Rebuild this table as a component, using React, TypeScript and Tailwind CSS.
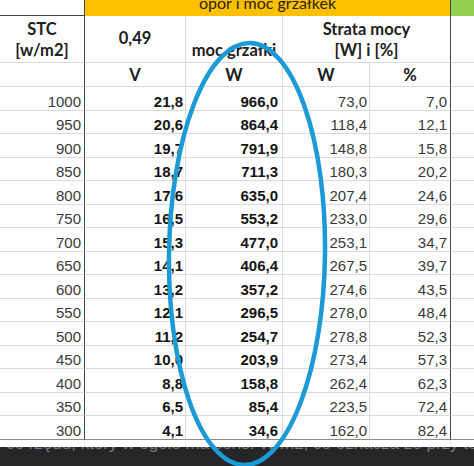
import React from "react";

const rows: [string, string, string, string, string][] = [
  ["1000", "21,8", "966,0", "73,0", "7,0"],
  ["950", "20,6", "864,4", "118,4", "12,1"],
  ["900", "19,7", "791,9", "148,8", "15,8"],
  ["850", "18,7", "711,3", "180,3", "20,2"],
  ["800", "17,6", "635,0", "207,4", "24,6"],
  ["750", "16,5", "553,2", "233,0", "29,6"],
  ["700", "15,3", "477,0", "253,1", "34,7"],
  ["650", "14,1", "406,4", "267,5", "39,7"],
  ["600", "13,2", "357,2", "274,6", "43,5"],
  ["550", "12,1", "296,5", "278,0", "48,4"],
  ["500", "11,2", "254,7", "278,8", "52,3"],
  ["450", "10,0", "203,9", "273,4", "57,3"],
  ["400", "8,8", "158,8", "262,4", "62,3"],
  ["350", "6,5", "85,4", "223,5", "72,4"],
  ["300", "4,1", "34,6", "162,0", "82,4"],
];

function DataRow({ r, last }: { r: [string, string, string, string, string]; last: boolean }) {
  const b = last ? "border-b-[#8a8a8a]" : "border-b-[#dadada]";
  const base = `border-b border-r flex items-end justify-end pb-[1px] leading-[15px] ${b}`;
  return (
    <div className="grid grid-cols-[85px_101px_97px_87px_81px_23px] h-[23.53px] text-[15px] font-['Liberation_Sans',Arial,sans-serif]">
      <div className={`${base} border-r-[#454545] pr-[3px] text-[#3a3a3a]`}>{r[0]}</div>
      <div className={`${base} border-r-[#dadada] pr-[2px] font-bold text-[#141414]`}>{r[1]}</div>
      <div className={`${base} border-r-[#dadada] pr-[4px] font-bold text-[#141414]`}>{r[2]}</div>
      <div className={`${base} border-r-[#dadada] pr-[2px] text-[#3a3a3a]`}>{r[3]}</div>
      <div className={`${base} border-r-[#454545] pr-[3px] text-[#3a3a3a]`}>{r[4]}</div>
      <div className={`border-b ${b}`}></div>
    </div>
  );
}

export default function App() {
  return (
    <div className="relative w-[474px] h-[466px] overflow-hidden bg-white">
      <div className="flex flex-col">
        {/* header row 1 */}
        <div className="grid grid-cols-[85px_366px_23px] h-[16px] font-['Lato','Liberation_Sans',sans-serif]">
          <div className="border-b border-r border-b-[#454545] border-r-[#454545]"></div>
          <div className="bg-[#FFC000] border-r border-r-[#454545] overflow-hidden text-center">
            <div className="-mt-[5px] text-[16px] leading-[16px] text-[#2a2300]">opór i moc grzałkek</div>
          </div>
          <div className="bg-[#92D050]"></div>
        </div>
        {/* header row 2 */}
        <div className="grid grid-cols-[85px_101px_97px_168px_23px] h-[47px] font-['Lato','Liberation_Sans',sans-serif] font-bold text-[16.5px] leading-[21px] text-[#202020]">
          <div className="border-b border-r border-b-[#dadada] border-r-[#454545] pt-[3px] text-center">
            <div>STC</div>
            <div>[w/m2]</div>
          </div>
          <div className="border-b border-r border-[#dadada] pt-[12px] text-center">0,49</div>
          <div className="border-b border-r border-[#dadada] pt-[24px] text-center whitespace-nowrap">moc grzałki</div>
          <div className="border-b border-r border-b-[#dadada] border-r-[#454545] pt-[3px] text-center">
            <div>Strata mocy</div>
            <div>[W] i [%]</div>
          </div>
          <div className="border-b border-b-[#dadada]"></div>
        </div>
        {/* header row 3 */}
        <div className="grid grid-cols-[85px_101px_97px_87px_81px_23px] h-[24px] font-['Lato','Liberation_Sans',sans-serif] font-bold text-[16.5px] leading-[21px] text-[#202020]">
          <div className="border-b border-r border-b-[#dadada] border-r-[#454545]"></div>
          <div className="border-b border-r border-[#dadada] pt-[2px] text-center">V</div>
          <div className="border-b border-r border-[#dadada] pt-[2px] text-center">W</div>
          <div className="border-b border-r border-[#dadada] pt-[2px] text-center">W</div>
          <div className="border-b border-r border-b-[#dadada] border-r-[#454545] pt-[2px] text-center">%</div>
          <div className="border-b border-b-[#dadada]"></div>
        </div>
        {rows.map((r, i) => (
          <DataRow key={r[0]} r={r} last={i === rows.length - 1} />
        ))}
        {/* white strip */}
        <div className="grid grid-cols-[85px_101px_97px_87px_81px_23px] h-[7px]">
          <div className="border-r border-r-[#eeeeee]"></div>
          <div className="border-r border-r-[#f0f0f0]"></div>
          <div className="border-r border-r-[#f0f0f0]"></div>
          <div className="border-r border-r-[#f0f0f0]"></div>
          <div className="border-r border-r-[#eeeeee]"></div>
          <div></div>
        </div>
        {/* dark caption bar */}
        <div className="h-[19px] bg-[#262628] overflow-hidden">
          <div className="-mt-[12px] pl-[6px] whitespace-nowrap text-[17px] leading-[17px] text-[#7c7c80] font-['Liberation_Sans',Arial,sans-serif]">
            co rzędu, który w ogóle ma sens: W/m2, co oznacza że przy tej wartości są jego
          </div>
        </div>
      </div>
      <svg className="absolute inset-0 pointer-events-none" width="474" height="466" viewBox="0 0 474 466">
        <ellipse cx="247" cy="254" rx="78" ry="211" fill="none" stroke="#1b9ad6" strokeWidth="4.5" transform="rotate(0.8 247 254)" />
      </svg>
    </div>
  );
}
